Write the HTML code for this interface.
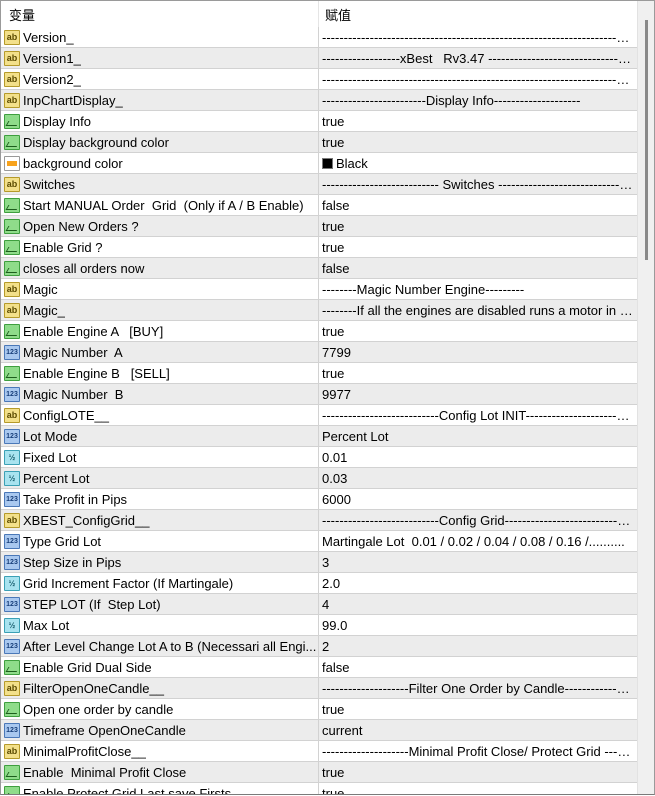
<!DOCTYPE html>
<html><head><meta charset="utf-8"><style>
*{margin:0;padding:0;box-sizing:border-box}
body{width:655px;height:796px;overflow:hidden;background:#fff;font-family:"Liberation Sans","Noto Sans CJK SC",sans-serif;font-size:13px;color:#000;position:relative}
#wrap{position:absolute;left:0;top:0;width:655px;height:795px;border:1px solid #9a9a9a;border-bottom:1px solid #7a7a7a;overflow:hidden;background:#fff}
#hdr{position:absolute;left:0;top:0;width:636px;height:26px;background:#fff}
#hdr span{position:absolute;top:4px}
#hdr .sep{position:absolute;left:317px;top:0;width:1px;height:26px;background:#e5e5e5}
#rows{position:absolute;left:0;top:26px;width:636px}
.r{height:21px;position:relative;border-bottom:1px solid #d2d2d2;white-space:pre}
.r:nth-child(even){background:#ececec}
.n{position:absolute;left:22px;top:3px;width:294px;overflow:hidden}
.v{position:absolute;left:321px;top:3px;width:311px;overflow:hidden;text-overflow:ellipsis}
.r:after{content:"";position:absolute;left:317px;top:0;width:1px;height:21px;background:#d2d2d2}
.i{position:absolute;left:3px;top:3px;width:16px;height:15px;border-radius:1px;font-size:8px;line-height:13px;text-align:center;font-weight:bold;overflow:hidden}
.ab{background:#f3e08a;border:1px solid #b59a2a;color:#5a4a00;font-size:9px}
.b{background:#8fdc8a;border:1px solid #3f9f3f}
.b:before{content:"";position:absolute;left:2px;top:6px;width:10px;height:4px;border-bottom:1.5px solid #1d5e1d;border-left:1.5px solid #1d5e1d;transform:skewX(-30deg)}
.n3{background:#a9c8ef;border:1px solid #4a78b8;color:#173e7a;font-size:7px}
.d{background:#a8e3ef;border:1px solid #3ba0b5;color:#145a6a;font-size:8px}
.c{background:#fff;border:1px solid #999}
.c:before{content:"";position:absolute;left:2px;top:4px;width:10px;height:5px;background:#f7a21c}
.sw{display:inline-block;width:11px;height:11px;background:#000;border:1px solid #777;vertical-align:-1px;margin-right:3px}
#sb{position:absolute;left:636px;top:0;width:18px;height:795px;background:#f0f0f0;border-left:1px solid #e2e2e2}
#th{position:absolute;left:644px;top:19px;width:3px;height:240px;background:#8a8a8a}
</style></head><body><div id="wrap">
<div id="hdr"><span style="left:8px">变量</span><span style="left:324px">赋值</span><div class="sep"></div></div>
<div id="rows">
<div class="r"><span class="i ab">ab</span><span class="n">Version_</span><span class="v">--------------------------------------------------------------------------------------</span></div>
<div class="r"><span class="i ab">ab</span><span class="n">Version1_</span><span class="v">------------------xBest   Rv3.47 -----------------------------------------</span></div>
<div class="r"><span class="i ab">ab</span><span class="n">Version2_</span><span class="v">--------------------------------------------------------------------------------------</span></div>
<div class="r"><span class="i ab">ab</span><span class="n">InpChartDisplay_</span><span class="v">------------------------Display Info--------------------</span></div>
<div class="r"><span class="i b"></span><span class="n">Display Info</span><span class="v">true</span></div>
<div class="r"><span class="i b"></span><span class="n">Display background color</span><span class="v">true</span></div>
<div class="r"><span class="i c"></span><span class="n">background color</span><span class="v"><span class="sw"></span>Black</span></div>
<div class="r"><span class="i ab">ab</span><span class="n">Switches</span><span class="v">--------------------------- Switches -----------------------------------</span></div>
<div class="r"><span class="i b"></span><span class="n">Start MANUAL Order  Grid  (Only if A / B Enable)</span><span class="v">false</span></div>
<div class="r"><span class="i b"></span><span class="n">Open New Orders ?</span><span class="v">true</span></div>
<div class="r"><span class="i b"></span><span class="n">Enable Grid ?</span><span class="v">true</span></div>
<div class="r"><span class="i b"></span><span class="n">closes all orders now</span><span class="v">false</span></div>
<div class="r"><span class="i ab">ab</span><span class="n">Magic</span><span class="v">--------Magic Number Engine---------</span></div>
<div class="r"><span class="i ab">ab</span><span class="n">Magic_</span><span class="v">--------If all the engines are disabled runs a motor in default mode</span></div>
<div class="r"><span class="i b"></span><span class="n">Enable Engine A   [BUY]</span><span class="v">true</span></div>
<div class="r"><span class="i n3">123</span><span class="n">Magic Number  A</span><span class="v">7799</span></div>
<div class="r"><span class="i b"></span><span class="n">Enable Engine B   [SELL]</span><span class="v">true</span></div>
<div class="r"><span class="i n3">123</span><span class="n">Magic Number  B</span><span class="v">9977</span></div>
<div class="r"><span class="i ab">ab</span><span class="n">ConfigLOTE__</span><span class="v">---------------------------Config Lot INIT-----------------------------</span></div>
<div class="r"><span class="i n3">123</span><span class="n">Lot Mode</span><span class="v">Percent Lot</span></div>
<div class="r"><span class="i d">½</span><span class="n">Fixed Lot</span><span class="v">0.01</span></div>
<div class="r"><span class="i d">½</span><span class="n">Percent Lot</span><span class="v">0.03</span></div>
<div class="r"><span class="i n3">123</span><span class="n">Take Profit in Pips</span><span class="v">6000</span></div>
<div class="r"><span class="i ab">ab</span><span class="n">XBEST_ConfigGrid__</span><span class="v">---------------------------Config Grid-------------------------------</span></div>
<div class="r"><span class="i n3">123</span><span class="n">Type Grid Lot</span><span class="v">Martingale Lot  0.01 / 0.02 / 0.04 / 0.08 / 0.16 /..........</span></div>
<div class="r"><span class="i n3">123</span><span class="n">Step Size in Pips</span><span class="v">3</span></div>
<div class="r"><span class="i d">½</span><span class="n">Grid Increment Factor (If Martingale)</span><span class="v">2.0</span></div>
<div class="r"><span class="i n3">123</span><span class="n">STEP LOT (If  Step Lot)</span><span class="v">4</span></div>
<div class="r"><span class="i d">½</span><span class="n">Max Lot</span><span class="v">99.0</span></div>
<div class="r"><span class="i n3">123</span><span class="n">After Level Change Lot A to B (Necessari all Engi...</span><span class="v">2</span></div>
<div class="r"><span class="i b"></span><span class="n">Enable Grid Dual Side</span><span class="v">false</span></div>
<div class="r"><span class="i ab">ab</span><span class="n">FilterOpenOneCandle__</span><span class="v">--------------------Filter One Order by Candle---------------------</span></div>
<div class="r"><span class="i b"></span><span class="n">Open one order by candle</span><span class="v">true</span></div>
<div class="r"><span class="i n3">123</span><span class="n">Timeframe OpenOneCandle</span><span class="v">current</span></div>
<div class="r"><span class="i ab">ab</span><span class="n">MinimalProfitClose__</span><span class="v">--------------------Minimal Profit Close/ Protect Grid ---------------</span></div>
<div class="r"><span class="i b"></span><span class="n">Enable  Minimal Profit Close</span><span class="v">true</span></div>
<div class="r"><span class="i b"></span><span class="n">Enable Protect Grid Last save Firsts</span><span class="v">true</span></div>
</div>
<div id="sb"></div><div id="th"></div>
</div></body></html>
